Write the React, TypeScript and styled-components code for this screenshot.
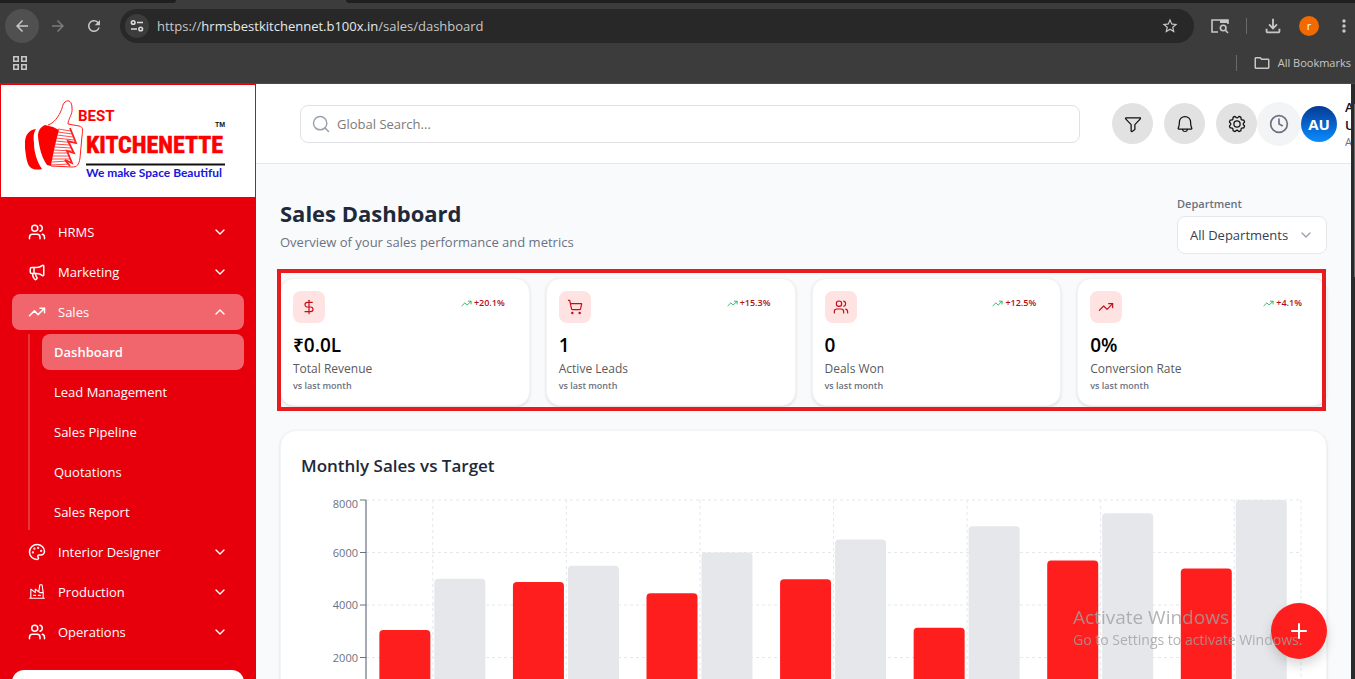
import React, { useLayoutEffect, useRef, useState } from "react";
import styled, { createGlobalStyle, css } from "styled-components";
import {
  ChevronDown,
  ChevronUp,
  Clock,
  DollarSign,
  Megaphone,
  Palette,
  Plus,
  Search,
  ShoppingCart,
  TrendingUp,
  Users,
} from "lucide-react";
import { PiBell, PiFactory, PiFunnel, PiGear } from "react-icons/pi";
import {
  MdArrowBack,
  MdArrowForward,
  MdMoreVert,
  MdOutlineFileDownload,
  MdOutlineFolder,
  MdRefresh,
  MdStarBorder,
} from "react-icons/md";

const GlobalStyle = createGlobalStyle`
  *, *::before, *::after { box-sizing: border-box; }
  body {
    margin: 0;
    overflow: hidden;
    background: #3c3c3c;
    font-family: "Open Sans", "Noto Sans", sans-serif;
    font-size: 13px;
    line-height: 20px;
    color: #1e2939;
  }
  button, input, select { font: inherit; color: inherit; }
  button { border: 0; padding: 0; background: none; cursor: pointer; }
  a { color: inherit; text-decoration: none; }
  h1, h2, p { margin: 0; }
  svg { display: block; flex: none; }
`;

const Window = styled.div`
  display: flex;
  flex-direction: column;
  height: 100vh;
  overflow: hidden;
`;

/* ---------- Browser frame ---------- */

const TabStrip = styled.div`
  display: flex;
  flex: none;
  height: 3px;
  background: #3c3c3c;
`;

const StripPart = styled.div<{ $grow?: boolean }>`
  background: #1f2120;
  ${(p) =>
    p.$grow
      ? css`
          flex: 1;
          border-bottom-left-radius: 3px;
        `
      : css`
          width: 176px;
          margin-right: 170px;
          border-bottom-right-radius: 3px;
        `}
`;

const Toolbar = styled.div`
  display: flex;
  flex: none;
  align-items: center;
  height: 46px;
  padding-left: 4px;
  background: #3c3c3c;
  color: #c7c7c7;
`;

const ToolButton = styled.button<{ $active?: boolean; $dim?: boolean; $narrow?: boolean }>`
  display: grid;
  place-items: center;
  flex: none;
  width: ${(p) => (p.$narrow ? 20 : 34)}px;
  height: 34px;
  margin: 0 1px;
  border-radius: 17px;
  color: ${(p) => (p.$dim ? "#7c7c7c" : "#c7c7c7")};
  background: ${(p) => (p.$active ? "#505050" : "transparent")};
`;

const AddressBar = styled.div`
  display: flex;
  flex: 1;
  align-items: center;
  gap: 8px;
  height: 34px;
  margin: 0 8px;
  padding: 0 6px 0 5px;
  border-radius: 17px;
  background: #282828;
`;

const SiteButton = styled.button`
  display: grid;
  place-items: center;
  width: 24px;
  height: 24px;
  border-radius: 12px;
  background: #3c3c3c;
`;

const Url = styled.span`
  flex: 1;
  font-size: 13px;
  color: #c7c7c7;
  b {
    font-weight: 400;
    color: #e8e8e8;
  }
`;

const Profile = styled.button`
  width: 20px;
  height: 20px;
  margin: 0 14px 0 8px;
  border-radius: 10px;
  background: #f06a00;
  color: #fff;
  font-size: 11px;
  line-height: 18px;
`;

const Divider = styled.span<{ $spaced?: boolean }>`
  width: 1px;
  height: 16px;
  margin: ${(p) => (p.$spaced ? "0 8px" : "0")};
  background: #6a6a6a;
`;

const BookmarkBar = styled.div`
  display: flex;
  flex: none;
  align-items: center;
  justify-content: space-between;
  height: 35px;
  padding: 0 4px 6px 13px;
  border-bottom: 1px solid #4a4a4a;
  background: #3c3c3c;
  color: #c7c7c7;
`;

const Bookmarks = styled.div`
  display: flex;
  align-items: center;
  gap: 16px;
`;

const BookmarkButton = styled.button`
  display: flex;
  align-items: center;
  gap: 7px;
  font-size: 11px;
  color: #c7c7c7;
`;

/* ---------- Page shell ---------- */

const Page = styled.div`
  display: flex;
  flex: 1;
  min-height: 0;
`;

const Scrollbar = styled.div`
  flex: none;
  width: 4px;
  padding: 20px 0 0 3px;
  background: #2b2b2b;
`;

const Thumb = styled.div`
  height: 30%;
  background: #6b6b6b;
`;

const Sidebar = styled.aside`
  flex: none;
  width: 256px;
  overflow: hidden;
  background: #e7000b;
`;

const LogoBox = styled.div`
  display: flex;
  align-items: center;
  height: 114px;
  padding-left: 24px;
  border: 1px solid #e7000b;
  background: #fff;
`;

const Nav = styled.nav`
  display: flex;
  flex-direction: column;
  gap: 4px;
  padding: 16px 12px 20px;
  font-size: 13px;
  color: #fff;
`;

const NavButton = styled.button<{ $open?: boolean }>`
  display: flex;
  align-items: center;
  gap: 12px;
  height: 36px;
  padding: 0 16px;
  border-radius: 8px;
  background: ${(p) => (p.$open ? "rgba(255,255,255,0.4)" : "transparent")};
  span {
    flex: 1;
    text-align: left;
  }
`;

const SubNav = styled.div`
  display: flex;
  flex-direction: column;
  gap: 4px;
  margin-left: 16px;
  padding-left: 12px;
  border-left: 2px solid rgba(255, 255, 255, 0.2);
`;

const SubLink = styled.a<{ $current?: boolean }>`
  height: 36px;
  padding: 0 12px;
  border-radius: 8px;
  line-height: 36px;
  font-weight: ${(p) => (p.$current ? 600 : 400)};
  background: ${(p) => (p.$current ? "rgba(255,255,255,0.4)" : "transparent")};
`;

const SidebarCard = styled.div`
  height: 64px;
  margin: 0 12px;
  border-radius: 12px;
  background: #fff;
`;

const Content = styled.div`
  display: flex;
  flex: 1;
  flex-direction: column;
  min-width: 0;
  overflow: hidden;
  background: #f9fafb;
`;

const Header = styled.header`
  display: flex;
  flex: none;
  align-items: center;
  height: 80px;
  padding-left: 44px;
  border-bottom: 1px solid #e5e7eb;
  background: #fff;
  overflow: hidden;
`;

const SearchBox = styled.label`
  display: flex;
  flex: 1;
  align-items: center;
  gap: 6px;
  height: 38px;
  margin-right: 32px;
  padding: 0 10px;
  border: 1px solid #dfe1e4;
  border-radius: 8px;
  color: #99a1af;
  input {
    flex: 1;
    min-width: 0;
    padding: 0;
    border: 0;
    outline: 0;
    background: none;
    color: #1e2939;
  }
  input::placeholder {
    color: #7a7a7a;
    opacity: 1;
  }
`;

const Actions = styled.div`
  display: flex;
  gap: 11px;
`;

const RoundButton = styled.button<{ $light?: boolean }>`
  display: grid;
  place-items: center;
  flex: none;
  width: ${(p) => (p.$light ? 44 : 41)}px;
  height: ${(p) => (p.$light ? 44 : 41)}px;
  border-radius: 50%;
  background: ${(p) => (p.$light ? "#f3f4f6" : "#e2e2e2")};
  color: ${(p) => (p.$light ? "#6a7282" : "#111")};
`;

const Avatar = styled.div`
  flex: none;
  width: 36px;
  height: 36px;
  border-radius: 18px;
  background: linear-gradient(#053a94, #0a8cff);
  color: #fff;
  font-size: 15px;
  font-weight: 700;
  line-height: 36px;
  text-align: center;
`;

const UserText = styled.div`
  width: 6px;
  margin-left: 8px;
  overflow: hidden;
  font-size: 13px;
  font-weight: 600;
  line-height: 18px;
  color: #101010;
  small {
    display: block;
    font-size: 11px;
    font-weight: 400;
    line-height: 16px;
    color: #6a7282;
  }
`;

/* ---------- Dashboard ---------- */

const Main = styled.main`
  display: flex;
  flex-direction: column;
  gap: 24px;
  padding: 32px 24px 24px;
`;

const TitleRow = styled.div`
  display: flex;
  align-items: center;
  justify-content: space-between;
`;

const Title = styled.h1`
  margin-bottom: 4px;
  font-size: 22px;
  font-weight: 700;
  line-height: 30px;
`;

const Subtitle = styled.p`
  color: #6a7282;
`;

const Field = styled.div`
  display: flex;
  flex-direction: column;
  gap: 4px;
  width: 150px;
  label {
    font-size: 11px;
    font-weight: 600;
    line-height: 16px;
    color: #6a7282;
  }
`;

const SelectBox = styled.div`
  display: grid;
  align-items: center;
  color: #99a1af;
  > * {
    grid-area: 1 / 1;
  }
  svg {
    justify-self: end;
    margin-right: 13px;
    pointer-events: none;
  }
  select {
    appearance: none;
    width: 100%;
    height: 38px;
    padding: 0 32px 0 12px;
    border: 1px solid #e5e7eb;
    border-radius: 8px;
    background: #fff;
    color: #364153;
  }
`;

const Stats = styled.section`
  position: relative;
  display: grid;
  grid-template-columns: repeat(4, 1fr);
  gap: 16px;
`;

const Highlight = styled.div`
  position: absolute;
  inset: -9px 1px -5px -3px;
  border: 4px solid #e81c1e;
  pointer-events: none;
`;

const StatCard = styled.article`
  padding: 12px;
  border: 1px solid #f3f4f6;
  border-radius: 14px;
  background: #fff;
  box-shadow: 0 1px 3px rgba(0, 0, 0, 0.12);
`;

const StatTop = styled.div`
  display: flex;
  justify-content: space-between;
  align-items: flex-start;
`;

const StatIcon = styled.div`
  display: grid;
  place-items: center;
  width: 32px;
  height: 32px;
  border-radius: 8px;
  background: #ffe2e2;
  color: #c10f16;
`;

const Trend = styled.div`
  display: flex;
  align-items: center;
  gap: 2px;
  padding: 4px 12px;
  font-size: 9px;
  font-weight: 600;
  line-height: 16px;
  color: #b01018;
  svg {
    color: #22b35c;
  }
`;

const StatValue = styled.p`
  margin: 8px 0 1px;
  font-size: 19px;
  font-weight: 600;
  line-height: 28px;
  color: #000;
`;

const StatLabel = styled.p`
  font-size: 12px;
  font-weight: 500;
  line-height: 18px;
  color: #5a5a5a;
`;

const StatNote = styled.p`
  font-size: 9px;
  font-weight: 600;
  line-height: 15px;
  color: #6a7282;
`;

const ChartCard = styled.section`
  padding: 20px;
  border: 1px solid #f3f4f6;
  border-radius: 16px;
  background: #fff;
  box-shadow: 0 1px 3px rgba(0, 0, 0, 0.12);
`;

const ChartTitle = styled.h2`
  margin-bottom: 14px;
  font-size: 17px;
  font-weight: 600;
  line-height: 30px;
`;

const ChartArea = styled.div`
  height: 260px;
  overflow: hidden;
  svg {
    font-size: 11px;
  }
`;

const AddButton = styled.button`
  position: fixed;
  right: 28px;
  bottom: 20px;
  display: grid;
  place-items: center;
  width: 56px;
  height: 56px;
  border-radius: 28px;
  background: #ff1e1e;
  color: #fff;
  box-shadow: 0 6px 12px rgba(0, 0, 0, 0.16);
`;

const Watermark = styled.div`
  position: fixed;
  right: 46px;
  bottom: 28px;
  width: 236px;
  font-size: 14px;
  line-height: 22px;
  color: rgba(160, 160, 160, 0.8);
  white-space: nowrap;
  pointer-events: none;
  strong {
    display: block;
    font-size: 19px;
    font-weight: 400;
    line-height: 24px;
  }
`;

/* ---------- Drawings ---------- */

const Logo = () => (
  <svg width="201" height="84" viewBox="0 -1 201 84" role="img" aria-label="Best Kitchenette">
    <path d="M11 29C2 30-1 38 0 48C1 57 2 64 5 67C8 70 13 70 17 69C12 62 9 52 9 43C8 36 9 32 11 29Z" fill="#fe0000" />
    <path d="M20 25C16 27 13 30 13 36C14 48 17 58 22 65L26 66C28 55 30 44 34 30L28 27Z" fill="#fe0000" />
    <g fill="none" stroke="#fe2020">
      <path d="M23 25C29 23 33 17 35 13C38 8 37 4 40 2C44-1 47 2 47 8C48 14 43 19 43 24L54 26C58 27 58 29 57 36L55 58C54 65 52 67 47 67L26 66" />
      <path
        strokeWidth="0.8"
        d="M33 29L46 31M33 32L47 34M32 35L48 37M31 38L49 40M31 41L51 43M30 44L44 45M30 47L46 48M29 50L48 51M28 53L43 53M28 56L45 56M27 59L46 59M27 62L43 61M26 65L44 64"
      />
      <path strokeWidth="1.8" d="M45 28L51 43L43 41L49 53L42 51L47 63L40 60L45 66" />
    </g>
    <text x="53" y="21" fontFamily="Roboto, sans-serif" fontSize="15" fontWeight="700" fill="#fe0000">BEST</text>
    <text x="61" y="53" fontFamily="'Liberation Sans Narrow', 'Roboto Condensed', 'DejaVu Sans Condensed', sans-serif" fontSize="24" fontWeight="700" fill="#fe0000" stroke="#fe0000" strokeWidth="0.6">KITCHENETTE</text>
    <text x="190" y="27" fontFamily="'Liberation Sans', sans-serif" fontSize="7" fontWeight="700" fill="#111">TM</text>
    <path d="M61 64.5H200" stroke="#111" strokeWidth="2" />
    <text x="61" y="77" fontFamily="Lato, sans-serif" fontSize="12" fontWeight="700" fill="#1616dc">We make Space Beautiful</text>
  </svg>
);

const TuneIcon = () => (
  <svg width="14" height="14" viewBox="0 0 14 14" fill="none" stroke="#dcdcdc" strokeWidth="1.6">
    <circle cx="3.2" cy="3.5" r="1.8" />
    <path d="M7 3.5H13M1 10H7" />
    <circle cx="10.7" cy="10" r="1.8" />
  </svg>
);

const TabSearchIcon = () => (
  <svg width="18" height="16" viewBox="0 0 18 16" fill="none" stroke="#c7c7c7" strokeWidth="1.6">
    <path d="M7 14H1V2H17V6" />
    <path d="M9 3.5H17" strokeWidth="3" />
    <circle cx="12.2" cy="10" r="2.8" />
    <path d="M14.2 12L17 15" />
  </svg>
);

const AppsIcon = () => (
  <svg width="14" height="14" viewBox="0 0 14 14" fill="none" stroke="#c7c7c7" strokeWidth="1.6">
    <path d="M0.8 0.8H5.2V5.2H0.8ZM8.8 0.8H13.2V5.2H8.8ZM0.8 8.8H5.2V13.2H0.8ZM8.8 8.8H13.2V13.2H8.8Z" />
  </svg>
);

/* ---------- Chart ---------- */

const SERIES = [
  { sales: 3050, target: 5000 },
  { sales: 4880, target: 5500 },
  { sales: 4450, target: 6000 },
  { sales: 4985, target: 6500 },
  { sales: 3130, target: 7000 },
  { sales: 5700, target: 7500 },
  { sales: 5390, target: 8000 },
];
const TICKS = [8000, 6000, 4000, 2000];

const PLOT = { left: 65, right: 5, top: 5, height: 210 };
const yFor = (value: number) => PLOT.top + PLOT.height * (1 - value / 8000);

const barPath = (x: number, value: number, width: number) => {
  const top = yFor(value);
  return `M${x} ${PLOT.top + PLOT.height}V${top + 4}q0-4 4-4h${width - 8}q4 0 4 4V${PLOT.top + PLOT.height}Z`;
};

const SalesChart = () => {
  const ref = useRef<HTMLDivElement>(null);
  const [width, setWidth] = useState(1000);

  useLayoutEffect(() => {
    const el = ref.current;
    if (!el) return;
    const measure = () => setWidth(el.clientWidth);
    measure();
    const observer = new ResizeObserver(measure);
    observer.observe(el);
    return () => observer.disconnect();
  }, []);

  const band = (width - PLOT.left - PLOT.right) / SERIES.length;
  const barWidth = Math.floor((band * 0.8 - 4) / 2);
  const end = width - PLOT.right;
  const bottom = PLOT.top + PLOT.height;

  return (
    <ChartArea ref={ref}>
      <svg width={width} height="260">
        <g stroke="#e5e7eb" strokeDasharray="3 3">
          {TICKS.map((t) => (
            <line key={t} x1={PLOT.left} x2={end} y1={yFor(t)} y2={yFor(t)} />
          ))}
          {SERIES.map((_, i) => {
            const x = PLOT.left + band * (i + 0.5);
            return <line key={i} x1={x} x2={x} y1={PLOT.top} y2={bottom} />;
          })}
          <line x1={end} x2={end} y1={PLOT.top} y2={bottom} />
        </g>
        <g stroke="#6a7282">
          <line x1={PLOT.left} x2={PLOT.left} y1={PLOT.top} y2={bottom} strokeWidth="2" strokeOpacity="0.6" />
          {TICKS.map((t) => (
            <line key={t} x1={PLOT.left - 6} x2={PLOT.left} y1={yFor(t)} y2={yFor(t)} />
          ))}
        </g>
        <g fill="#6a7282" textAnchor="end">
          {TICKS.map((t) => (
            <text key={t} x={PLOT.left - 8} y={t === 8000 ? yFor(t) + 8 : yFor(t) + 4}>
              {t}
            </text>
          ))}
        </g>
        {SERIES.map((d, i) => {
          const x = PLOT.left + band * (i + 0.1);
          return (
            <g key={i}>
              <path d={barPath(x, d.sales, barWidth)} fill="#ff1e1e" />
              <path d={barPath(x + barWidth + 4, d.target, barWidth)} fill="#e5e7eb" />
            </g>
          );
        })}
      </svg>
    </ChartArea>
  );
};

/* ---------- Data ---------- */

type NavEntry = { label: string; icon: React.ReactNode; children?: string[] };

const NAV: NavEntry[] = [
  { label: "HRMS", icon: <Users size={18} /> },
  { label: "Marketing", icon: <Megaphone size={18} /> },
  {
    label: "Sales",
    icon: <TrendingUp size={18} />,
    children: ["Dashboard", "Lead Management", "Sales Pipeline", "Quotations", "Sales Report"],
  },
  { label: "Interior Designer", icon: <Palette size={18} /> },
  { label: "Production", icon: <PiFactory size={18} /> },
  { label: "Operations", icon: <Users size={18} /> },
];

const STATS = [
  { icon: <DollarSign size={16} strokeWidth={1.75} />, value: "₹0.0L", label: "Total Revenue", trend: "+20.1%" },
  { icon: <ShoppingCart size={16} strokeWidth={1.75} />, value: "1", label: "Active Leads", trend: "+15.3%" },
  { icon: <Users size={16} strokeWidth={1.75} />, value: "0", label: "Deals Won", trend: "+12.5%" },
  { icon: <TrendingUp size={16} strokeWidth={1.75} />, value: "0%", label: "Conversion Rate", trend: "+4.1%" },
];

export default function App() {
  return (
    <Window>
      <GlobalStyle />
      <TabStrip>
        <StripPart />
        <StripPart $grow />
      </TabStrip>
      <Toolbar>
        <ToolButton $active aria-label="Back"><MdArrowBack size={18} /></ToolButton>
        <ToolButton $dim aria-label="Forward"><MdArrowForward size={18} /></ToolButton>
        <ToolButton aria-label="Reload"><MdRefresh size={18} /></ToolButton>
        <AddressBar>
          <SiteButton aria-label="Site information"><TuneIcon /></SiteButton>
          <Url>https://<b>hrmsbestkitchennet.b100x.in</b>/sales/dashboard</Url>
          <ToolButton aria-label="Bookmark this tab"><MdStarBorder size={18} /></ToolButton>
        </AddressBar>
        <ToolButton aria-label="Search tabs"><TabSearchIcon /></ToolButton>
        <Divider $spaced />
        <ToolButton aria-label="Downloads"><MdOutlineFileDownload size={22} /></ToolButton>
        <Profile>r</Profile>
        <ToolButton $narrow aria-label="Menu"><MdMoreVert size={20} /></ToolButton>
      </Toolbar>
      <BookmarkBar>
        <AppsIcon />
        <Bookmarks>
          <Divider />
          <BookmarkButton><MdOutlineFolder size={18} />All Bookmarks</BookmarkButton>
        </Bookmarks>
      </BookmarkBar>

      <Page>
        <Sidebar>
          <LogoBox><Logo /></LogoBox>
          <Nav>
            {NAV.map((item) => (
              <React.Fragment key={item.label}>
                <NavButton $open={!!item.children}>
                  {item.icon}
                  <span>{item.label}</span>
                  {item.children ? <ChevronUp size={16} /> : <ChevronDown size={16} />}
                </NavButton>
                {item.children && (
                  <SubNav>
                    {item.children.map((name, i) => (
                      <SubLink key={name} href="#" $current={i === 0}>{name}</SubLink>
                    ))}
                  </SubNav>
                )}
              </React.Fragment>
            ))}
          </Nav>
          <SidebarCard />
        </Sidebar>

        <Content>
          <Header>
            <SearchBox>
              <Search size={20} strokeWidth={1.75} />
              <input type="text" placeholder="Global Search..." aria-label="Global Search" />
            </SearchBox>
            <Actions>
              <RoundButton aria-label="Filter"><PiFunnel size={20} /></RoundButton>
              <RoundButton aria-label="Notifications"><PiBell size={20} /></RoundButton>
              <RoundButton aria-label="Settings"><PiGear size={20} /></RoundButton>
            </Actions>
            <RoundButton $light aria-label="History"><Clock size={20} /></RoundButton>
            <Avatar>AU</Avatar>
            <UserText>A<br />U<small>A</small></UserText>
          </Header>

          <Main>
            <TitleRow>
              <div>
                <Title>Sales Dashboard</Title>
                <Subtitle>Overview of your sales performance and metrics</Subtitle>
              </div>
              <Field>
                <label htmlFor="department">Department</label>
                <SelectBox>
                  <select id="department"><option>All Departments</option></select>
                  <ChevronDown size={16} />
                </SelectBox>
              </Field>
            </TitleRow>

            <Stats>
              {STATS.map((s) => (
                <StatCard key={s.label}>
                  <StatTop>
                    <StatIcon>{s.icon}</StatIcon>
                    <Trend><TrendingUp size={11} />{s.trend}</Trend>
                  </StatTop>
                  <StatValue>{s.value}</StatValue>
                  <StatLabel>{s.label}</StatLabel>
                  <StatNote>vs last month</StatNote>
                </StatCard>
              ))}
              <Highlight />
            </Stats>

            <ChartCard>
              <ChartTitle>Monthly Sales vs Target</ChartTitle>
              <SalesChart />
            </ChartCard>
          </Main>
        </Content>
        <Scrollbar><Thumb /></Scrollbar>
      </Page>

      <AddButton aria-label="Add"><Plus size={24} /></AddButton>
      <Watermark><strong>Activate Windows</strong>Go to Settings to activate Windows.</Watermark>
    </Window>
  );
}
